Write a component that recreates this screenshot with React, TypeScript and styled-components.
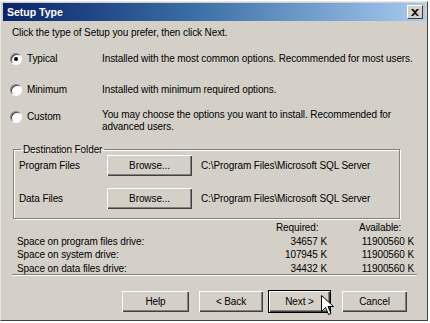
import React, { useState } from 'react';
import styled, { createGlobalStyle } from 'styled-components';

const FACE = '#d4d0c8';
const SHADOW = '#808080';
const DARK = '#404040';
const HILITE = '#ffffff';
const FONT = '"Liberation Sans", Arial, sans-serif';

const GlobalStyle = createGlobalStyle`
  html, body {
    margin: 0;
    padding: 0;
    background: #ffffff;
  }
  body {
    font-family: ${FONT};
    font-size: 10px;
    letter-spacing: -0.1px;
    color: #000000;
  }
`;

const Window = styled.div`
  box-sizing: border-box;
  width: 428px;
  height: 320px;
  margin: 1px 0 0 0;
  background: ${FACE};
  border-top: 1px solid #e8e8e8;
  border-left: 1px solid #e8e8e8;
  border-right: 1px solid ${DARK};
  border-bottom: 1px solid ${DARK};
  padding: 1px 2px 2px 2px;
  display: flex;
  flex-direction: column;
`;

const TitleBar = styled.div`
  height: 18px;
  display: flex;
  align-items: center;
  justify-content: space-between;
  padding: 0 2px 0 4px;
  background: linear-gradient(to right, #0a246a 0%, #3a6ea5 45%, #a6caf0 100%);
`;

const Title = styled.span`
  color: #ffffff;
  font-family: ${FONT};
  font-weight: bold;
  font-size: 10.5px;
  letter-spacing: 0;
`;

const CloseButton = styled.button`
  box-sizing: border-box;
  width: 16px;
  height: 14px;
  padding: 0;
  background: ${FACE};
  border-top: 1px solid ${HILITE};
  border-left: 1px solid ${HILITE};
  border-right: 1px solid ${DARK};
  border-bottom: 1px solid ${DARK};
  display: flex;
  align-items: center;
  justify-content: center;
`;

const Body = styled.div`
  flex: 1;
  display: flex;
  flex-direction: column;
  padding: 5px 6px 0 7px;
`;

const Intro = styled.div`
  height: 13px;
  line-height: 13px;
  margin-left: 2px;
`;

const Options = styled.div`
  display: grid;
  grid-template-columns: 92px 1fr;
  margin-top: 13px;
`;

const OptionLabel = styled.label<{ $height: number }>`
  display: flex;
  align-items: flex-start;
  gap: 5px;
  height: ${(p) => p.$height}px;
  padding-top: 1px;
`;

const OptionText = styled.div<{ $height: number; $shift: number }>`
  height: ${(p) => p.$height}px;
  line-height: 12px;
  margin-top: ${(p) => p.$shift}px;
  padding-top: 1px;
  white-space: nowrap;
`;

const RadioOuter = styled.span`
  box-sizing: border-box;
  width: 12px;
  height: 12px;
  border-radius: 50%;
  background: #ffffff;
  border: 1px solid;
  border-color: ${SHADOW} ${HILITE} ${HILITE} ${SHADOW};
  box-shadow: inset 1px 1px 0 ${DARK};
  display: flex;
  align-items: center;
  justify-content: center;
  flex-shrink: 0;
`;

const RadioDot = styled.span`
  width: 4px;
  height: 4px;
  border-radius: 50%;
  background: #000000;
`;

const GroupBox = styled.fieldset`
  margin: 3px 19px 0 3px;
  padding: 0 6px 4px 5px;
  border: 1px solid ${SHADOW};
  box-shadow: inset 1px 1px 0 ${HILITE}, 1px 1px 0 ${HILITE};
  height: 75px;
  box-sizing: border-box;
`;

const Legend = styled.legend`
  padding: 0 2px;
  margin-left: 2px;
  line-height: 11px;
`;

const FolderRow = styled.div`
  display: grid;
  grid-template-columns: 88px 85px 1fr;
  align-items: center;
  height: 20px;
  margin-bottom: 13px;
`;

const Path = styled.span`
  padding-left: 9px;
  white-space: nowrap;
`;

const PushButton = styled.button<{ $width: number; $default?: boolean }>`
  box-sizing: border-box;
  width: ${(p) => p.$width}px;
  height: ${(p) => (p.$default ? 23 : 21)}px;
  font-family: ${FONT};
  font-size: 10px;
  letter-spacing: -0.1px;
  color: #000000;
  background: ${FACE};
  padding: 0;
  border: ${(p) => (p.$default ? '1px solid #000' : 'none')};
  box-shadow: inset 1px 1px 0 ${HILITE}, inset -1px -1px 0 ${DARK}, inset -2px -2px 0 ${SHADOW};
`;

const SpaceTable = styled.div`
  display: grid;
  grid-template-columns: 1fr 66px 87px;
  margin: 2px 5px 0 7px;
  line-height: 13.5px;
`;

const Num = styled.span`
  text-align: right;
`;

const Head = styled.span<{ $indent: number }>`
  padding-left: ${(p) => p.$indent}px;
`;

const Separator = styled.div`
  height: 0;
  margin: -1px 2px 0 2px;
  border-top: 1px solid ${SHADOW};
  border-bottom: 1px solid ${HILITE};
`;

const ButtonRow = styled.div`
  position: relative;
  display: flex;
  align-items: center;
  padding-left: 112px;
  margin-top: 14px;
`;

const Cursor = styled.svg`
  position: absolute;
  left: 311px;
  top: 5px;
`;

const options = [
  { id: 'typical', name: 'Typical', text: ['Installed with the most common options. Recommended for most users.'], height: 30, shift: 0 },
  { id: 'minimum', name: 'Minimum', text: ['Installed with minimum required options.'], height: 26, shift: 0 },
  { id: 'custom', name: 'Custom', text: ['You may choose the options you want to install. Recommended for', 'advanced users.'], height: 30, shift: -2 },
];

const space = [
  { label: 'Space on program files drive:', req: '34657 K', avail: '11900560 K' },
  { label: 'Space on system drive:', req: '107945 K', avail: '11900560 K' },
  { label: 'Space on data files drive:', req: '34432 K', avail: '11900560 K' },
];

const App: React.FC = () => {
  const [selected, setSelected] = useState('typical');

  return (
    <>
      <GlobalStyle />
      <Window>
        <TitleBar>
          <Title>Setup Type</Title>
          <CloseButton aria-label="Close">
            <svg width="8" height="7" viewBox="0 0 8 7">
              <path d="M0 0h2l2 2 2-2h2L5 3.5 8 7H6L4 5 2 7H0l3-3.5z" fill="#000" />
            </svg>
          </CloseButton>
        </TitleBar>
        <Body>
          <Intro>Click the type of Setup you prefer, then click Next.</Intro>
          <Options>
            {options.map((o) => (
              <React.Fragment key={o.id}>
                <OptionLabel $height={o.height} onClick={() => setSelected(o.id)}>
                  <RadioOuter>{selected === o.id && <RadioDot />}</RadioOuter>
                  {o.name}
                </OptionLabel>
                <OptionText $height={o.height - o.shift} $shift={o.shift}>
                  {o.text.map((t) => (
                    <div key={t}>{t}</div>
                  ))}
                </OptionText>
              </React.Fragment>
            ))}
          </Options>
          <GroupBox>
            <Legend>Destination Folder</Legend>
            <FolderRow>
              <span>Program Files</span>
              <PushButton $width={85}>Browse...</PushButton>
              <Path>C:\Program Files\Microsoft SQL Server</Path>
            </FolderRow>
            <FolderRow>
              <span>Data Files</span>
              <PushButton $width={85}>Browse...</PushButton>
              <Path>C:\Program Files\Microsoft SQL Server</Path>
            </FolderRow>
          </GroupBox>
          <SpaceTable>
            <span />
            <Head $indent={15}>Required:</Head>
            <Head $indent={32}>Available:</Head>
            {space.map((s) => (
              <React.Fragment key={s.label}>
                <span>{s.label}</span>
                <Num>{s.req}</Num>
                <Num>{s.avail}</Num>
              </React.Fragment>
            ))}
          </SpaceTable>
          <Separator />
          <ButtonRow>
            <PushButton $width={67}>Help</PushButton>
            <PushButton $width={64} style={{ marginLeft: 10 }}>&lt; Back</PushButton>
            <PushButton $width={63} $default style={{ marginLeft: 5 }}>Next &gt;</PushButton>
            <PushButton $width={65} style={{ marginLeft: 11 }}>Cancel</PushButton>
            <Cursor width="13" height="21" viewBox="0 0 13 21">
              <path d="M0.5 0.5v16l4-4 3 7 2.5-1-3-7h5.5z" fill="#fff" stroke="#000" strokeWidth="1" />
            </Cursor>
          </ButtonRow>
        </Body>
      </Window>
    </>
  );
};

export default App;
